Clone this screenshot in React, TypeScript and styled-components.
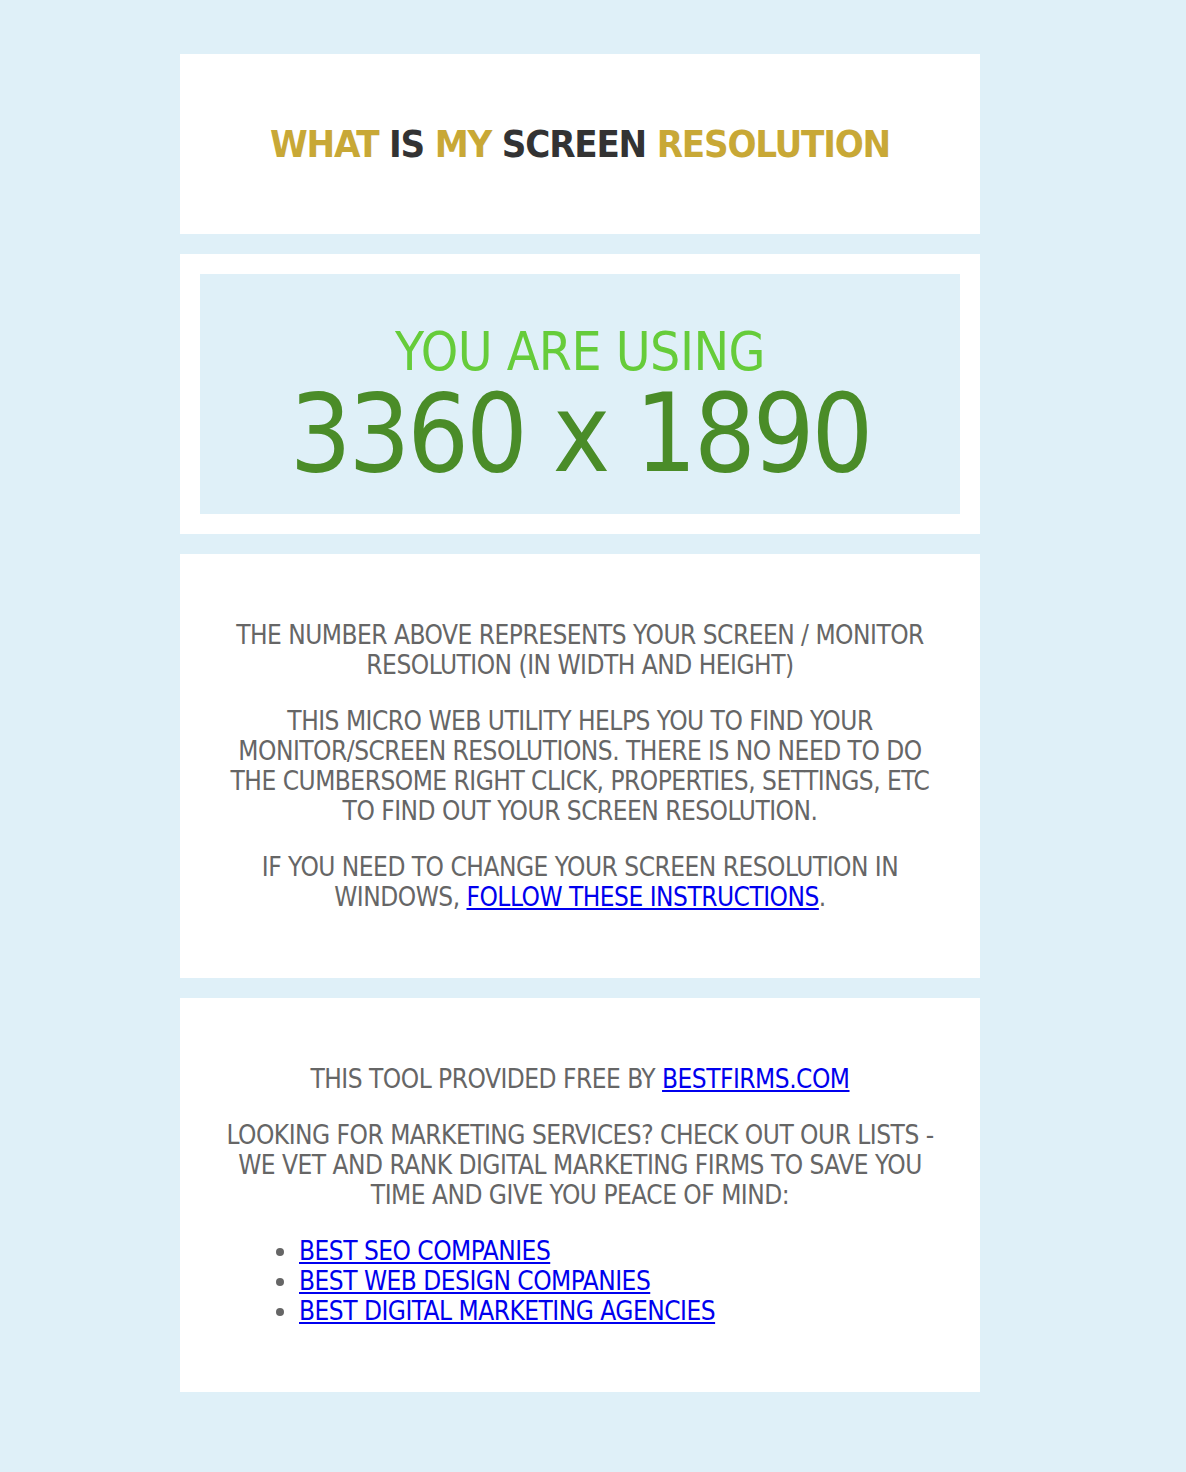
import React from "react";
import styled, { createGlobalStyle } from "styled-components";

const Global = createGlobalStyle`
  html, body { margin: 0; padding: 0; background: #dff0f8; }
  body { font-family: "DejaVu Sans Condensed", "Liberation Sans Narrow", "Liberation Sans", sans-serif; }
`;

const Page = styled.div`
  padding: 54px 0 80px 180px;
  display: flex;
  flex-direction: column;
  gap: 20px;
  width: 800px;
`;

const Card = styled.section<{ $pad?: number }>`
  background: #ffffff;
  padding: ${(p) => p.$pad ?? 40}px;
  text-align: center;
  color: #666666;
`;

const Title = styled.h1`
  margin: 26px 0;
  font-size: 38px;
  line-height: 48px;
  letter-spacing: -1.2px;
  font-weight: bold;
  text-transform: uppercase;
  color: #c8a836;
`;

const Dark = styled.span`
  color: #333333;
`;

const Display = styled.div`
  background: #dff0f8;
  padding: 48px 0 28px;
  display: flex;
  flex-direction: column;
  align-items: center;
`;

const Using = styled.div`
  font-size: 53px;
  line-height: 60px;
  letter-spacing: -0.5px;
  color: #66cc3a;
  text-transform: uppercase;
`;

const Big = styled.div`
  font-size: 108px;
  line-height: 104px;
  letter-spacing: -3px;
  color: #4a8c28;
`;

const Text = styled.p`
  margin: 26px 0;
  font-size: 26px;
  line-height: 30px;
  letter-spacing: -0.5px;
  text-transform: uppercase;
`;

const Link = styled.a`
  color: #0000ee;
  text-decoration: underline;
`;

const List = styled.ul`
  margin: 26px 0;
  padding-left: 79px;
  text-align: left;
  font-size: 26px;
  line-height: 30px;
  letter-spacing: -0.5px;
  text-transform: uppercase;
`;

export default function App() {
  return (
    <>
      <Global />
      <Page>
        <Card>
          <Title>
            What <Dark>is</Dark> my <Dark>screen</Dark> resolution
          </Title>
        </Card>
        <Card $pad={20}>
          <Display>
            <Using>You are using</Using>
            <Big>3360 x 1890</Big>
          </Display>
        </Card>
        <Card>
          <Text>The number above represents your screen / monitor resolution (in width and height)</Text>
          <Text>
            This micro web utility helps you to find your monitor/screen resolutions. There is no need to do
            the cumbersome right click, properties, settings, etc to find out your screen resolution.
          </Text>
          <Text>
            If you need to change your screen resolution in windows, <Link href="#">follow these instructions</Link>.
          </Text>
        </Card>
        <Card>
          <Text>
            This tool provided free by <Link href="#">bestfirms.com</Link>
          </Text>
          <Text>
            Looking for marketing services? Check out our lists - we vet and rank digital marketing firms to save you
            time and give you peace of mind:
          </Text>
          <List>
            <li><Link href="#">Best SEO Companies</Link></li>
            <li><Link href="#">Best Web Design Companies</Link></li>
            <li><Link href="#">Best Digital Marketing Agencies</Link></li>
          </List>
        </Card>
      </Page>
    </>
  );
}
